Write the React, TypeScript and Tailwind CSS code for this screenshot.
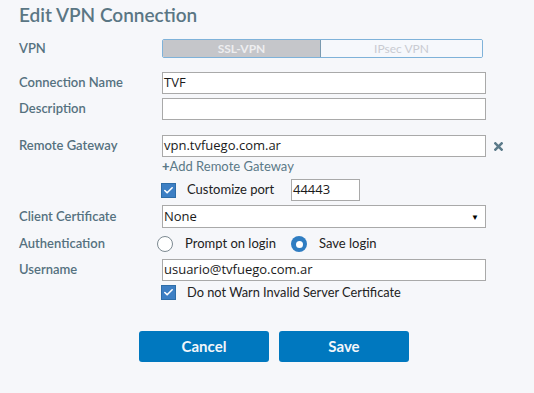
import { Check } from 'lucide-react'

const lato = "font-['Lato','Noto_Sans',sans-serif]"
const field = "font-['Open_Sans','Noto_Sans',sans-serif]"

function Label({ children }: { children: React.ReactNode }) {
  return (
    <div className={`w-[143px] shrink-0 text-[13px] font-semibold text-[#55717f] ${lato}`}>
      {children}
    </div>
  )
}

function TextBox({ value, className = 'w-[324px]' }: { value?: string; className?: string }) {
  return (
    <div
      className={`flex h-[22px] items-center border border-[#a9a9a9] bg-white pl-[1px] text-[13px] text-[#1a1a1a] ${field} ${className}`}
    >
      {value}
    </div>
  )
}

function CheckBox() {
  return (
    <span className="flex h-[15px] w-[15px] items-center justify-center border border-[#2e6da8] bg-[#3d7fc4]">
      <Check size={11} strokeWidth={3.5} className="text-white" />
    </span>
  )
}

function Radio({ checked }: { checked?: boolean }) {
  return checked ? (
    <span className="flex h-[16px] w-[16px] items-center justify-center rounded-full bg-[#2f7dc2]">
      <span className="h-[7px] w-[7px] rounded-full bg-white" />
    </span>
  ) : (
    <span className="h-[16px] w-[16px] rounded-full border border-[#7d8a92] bg-white" />
  )
}

export default function App() {
  return (
    <div className={`h-[393px] w-[534px] bg-[#f6f7fa] pl-[19px] ${lato}`}>
      <div className="h-[30px] pt-[3px] text-[19px] font-semibold leading-[24px] text-[#5a7684]">
        Edit VPN Connection
      </div>

      <div className="mt-[9px] flex h-[19px] items-center">
        <Label>VPN</Label>
        <div className="flex h-[19px] w-[321px] overflow-hidden rounded-[2px] border border-[#7fb2d9]">
          <div className="flex w-[157px] items-center justify-center bg-[#c5c6ca] text-[12px] font-bold text-[#eeeef0]">
            SSL-VPN
          </div>
          <div className="flex flex-1 items-center justify-center border-l border-[#7a9ab0] bg-[#f6f8fc] text-[12px] text-[#c9cbd2]">
            IPsec VPN
          </div>
        </div>
      </div>

      <div className="mt-[14px] flex items-center">
        <Label>Connection Name</Label>
        <TextBox value="TVF" />
      </div>
      <div className="mt-[4px] flex items-center">
        <Label>Description</Label>
        <TextBox />
      </div>

      <div className="mt-[15px] flex items-center">
        <Label>Remote Gateway</Label>
        <TextBox value="vpn.tvfuego.com.ar" />
        <svg viewBox="0 0 10 10" className="ml-[8px] h-[9px] w-[9px]">
          <path d="M1.5 1.5 L8.5 8.5 M8.5 1.5 L1.5 8.5" stroke="#5c7b8a" strokeWidth="2.8" strokeLinecap="square" />
        </svg>
      </div>
      <div className="mt-[1px] flex h-[17px] items-center pl-[143px] text-[13px] text-[#5b7987]">
        <span className="font-black">+</span>Add Remote Gateway
      </div>
      <div className="mt-[4px] flex h-[22px] items-center pl-[142px]">
        <CheckBox />
        <span className="ml-[11px] w-[104px] text-[13px] text-[#222]">Customize port</span>
        <TextBox value="44443" className="w-[69px]" />
      </div>

      <div className="mt-[4px] flex items-center">
        <Label>Client Certificate</Label>
        <div
          className={`flex h-[23px] w-[324px] items-center justify-between border border-[#a9a9a9] bg-white pl-[1px] pr-[6px] text-[13px] text-[#1a1a1a] ${field}`}
        >
          None
          <span className="text-[8px] text-black">▼</span>
        </div>
      </div>

      <div className="mt-[6px] flex h-[20px] items-center">
        <Label>Authentication</Label>
        <div className="-ml-[5px] flex items-center text-[13px] text-[#222]">
          <Radio />
          <span className="ml-[12px] w-[106px]">Prompt on login</span>
          <Radio checked />
          <span className="ml-[12px]">Save login</span>
        </div>
      </div>

      <div className="mt-[5px] flex items-center">
        <Label>Username</Label>
        <TextBox value="usuario@tvfuego.com.ar" />
      </div>
      <div className="mt-[3px] flex h-[17px] items-center pl-[142px]">
        <CheckBox />
        <span className="ml-[11px] text-[12.8px] text-[#222]">Do not Warn Invalid Server Certificate</span>
      </div>

      <div className="mt-[30px] flex gap-[10px] pl-[120px]">
        <button className="h-[31px] w-[130px] rounded-[3px] bg-[#0078bf] text-[15px] font-bold text-[#f2f6fa]">
          Cancel
        </button>
        <button className="h-[31px] w-[130px] rounded-[3px] bg-[#0078bf] text-[15px] font-bold text-[#f2f6fa]">
          Save
        </button>
      </div>
    </div>
  )
}
